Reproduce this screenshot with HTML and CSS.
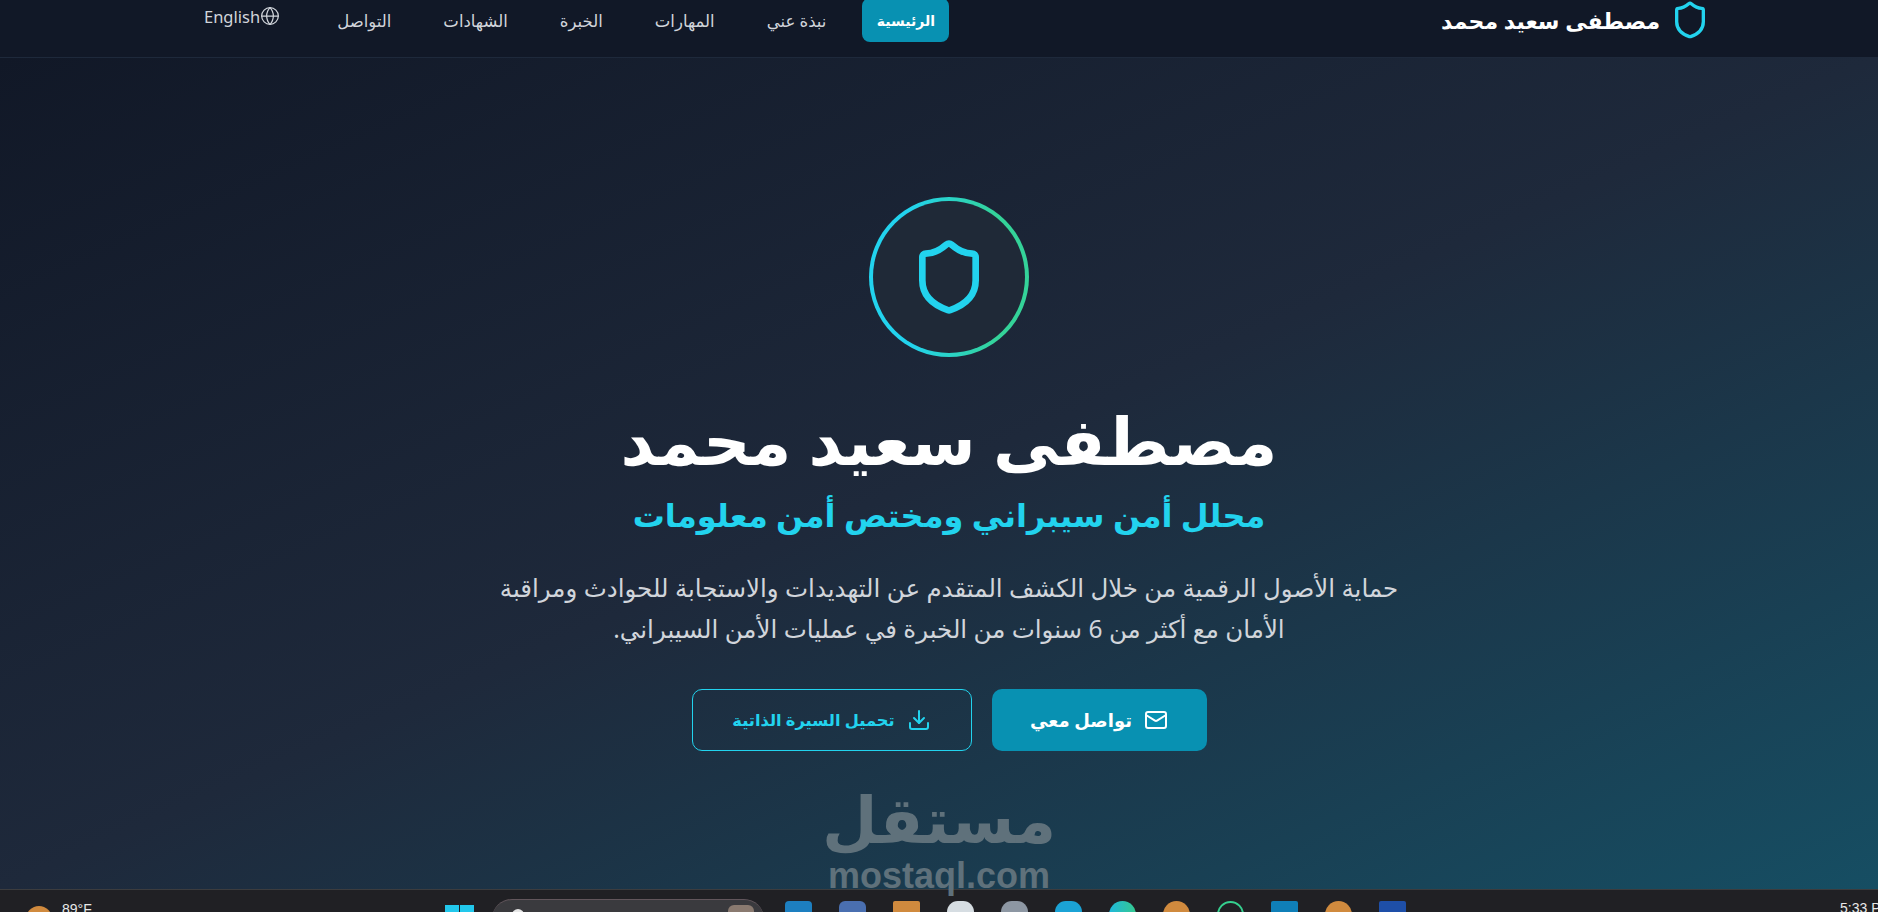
FILE: index.html

```html
<!DOCTYPE html>
<html lang="ar" dir="rtl">
<head>
  <meta charset="UTF-8">
  <title>مصطفى سعيد محمد</title>
  <link rel="stylesheet" href="styles.css">
</head>
<body>
  <header class="topbar">
    <div class="brand">
      <svg class="brand-icon" viewBox="0 0 24 24"><path d="M20 13c0 5-3.5 7.5-7.66 8.95a1 1 0 0 1-.67-.01C7.5 20.5 4 18 4 13V6a1 1 0 0 1 1-1c2 0 4.5-1.2 6.24-2.72a1.17 1.17 0 0 1 1.52 0C14.51 3.81 17 5 19 5a1 1 0 0 1 1 1z"/></svg>
      <span>مصطفى سعيد محمد</span>
    </div>
    <nav class="nav">
      <a class="active">الرئيسية</a>
      <a>نبذة عني</a>
      <a>المهارات</a>
      <a>الخبرة</a>
      <a>الشهادات</a>
      <a>التواصل</a>
      <a class="lang" dir="ltr">English<svg viewBox="0 0 24 24"><circle cx="12" cy="12" r="10"/><path d="M12 2a14.5 14.5 0 0 0 0 20 14.5 14.5 0 0 0 0-20"/><path d="M2 12h20"/></svg></a>
    </nav>
  </header>

  <main class="hero">
    <div class="hero-ring">
      <div class="hero-ring-inner">
        <svg viewBox="0 0 24 24"><path d="M20 13c0 5-3.5 7.5-7.66 8.95a1 1 0 0 1-.67-.01C7.5 20.5 4 18 4 13V6a1 1 0 0 1 1-1c2 0 4.5-1.2 6.24-2.72a1.17 1.17 0 0 1 1.52 0C14.51 3.81 17 5 19 5a1 1 0 0 1 1 1z"/></svg>
      </div>
    </div>
    <h1>مصطفى سعيد محمد</h1>
    <h2>محلل أمن سيبراني ومختص أمن معلومات</h2>
    <p>حماية الأصول الرقمية من خلال الكشف المتقدم عن التهديدات والاستجابة للحوادث ومراقبة الأمان مع أكثر من 6 سنوات من الخبرة في عمليات الأمن السيبراني.</p>
    <div class="actions">
      <a class="btn btn-primary">
        <svg viewBox="0 0 24 24"><rect x="2" y="4" width="20" height="16" rx="2"/><path d="m22 7-8.97 5.7a1.94 1.94 0 0 1-2.06 0L2 7"/></svg>
        تواصل معي
      </a>
      <a class="btn btn-outline">
        <svg viewBox="0 0 24 24"><path d="M21 15v4a2 2 0 0 1-2 2H5a2 2 0 0 1-2-2v-4"/><path d="m7 10 5 5 5-5"/><path d="M12 15V3"/></svg>
        تحميل السيرة الذاتية
      </a>
    </div>
  </main>

  <div class="watermark">
    <div class="watermark-ar">مستقل</div>
    <div class="watermark-en" dir="ltr">mostaql.com</div>
  </div>

  <footer class="taskbar" dir="ltr">
    <div class="weather"><span class="sun"></span><span>89°F</span></div>
    <div class="win-logo"><i></i><i></i></div>
    <div class="search"><span class="search-dot"></span><span class="search-pic"></span></div>
    <div class="tray">
      <span class="app blue"></span>
      <span class="app teams"></span>
      <span class="app folder"></span>
      <span class="app pale"></span>
      <span class="app grey"></span>
      <span class="app sky"></span>
      <span class="app chrome"></span>
      <span class="app orange"></span>
      <span class="app ring"></span>
      <span class="app square"></span>
      <span class="app orange"></span>
      <span class="app word"></span>
    </div>
    <div class="clock">5:33 PM</div>
  </footer>
</body>
</html>
```

FILE: styles.css

```css
* {
  box-sizing: border-box;
}

html, body {
  margin: 0;
  height: 912px;
  overflow: hidden;
}

body {
  position: relative;
  display: flex;
  flex-direction: column;
  font-family: "Noto Sans", "DejaVu Sans", sans-serif;
  background-color: #111827;
  color: #fff;
}

svg {
  fill: none;
  stroke: currentColor;
  stroke-width: 2;
  stroke-linecap: round;
  stroke-linejoin: round;
}

.topbar {
  flex: none;
  height: 58px;
  display: flex;
  justify-content: space-between;
  align-items: flex-start;
  padding: 0 168px 0 192px;
  background-color: #111827;
  border-bottom: 1px solid #1e293b;
}

.brand {
  display: flex;
  align-items: center;
  gap: 10px;
  margin-top: -2px;
  height: 44px;
  font-size: 22px;
  font-weight: 700;
}

.brand-icon {
  width: 40px;
  height: 40px;
  color: #22d3ee;
}

.nav {
  display: flex;
  align-items: flex-start;
  gap: 20px;
  margin-top: -2px;
}

.nav a {
  height: 44px;
  display: flex;
  align-items: center;
  padding: 0 16px;
  border-radius: 8px;
  font-size: 16.5px;
  color: #d1d5db;
}

.nav a.active {
  width: 87px;
  justify-content: center;
  padding: 0;
  background-color: #0891b2;
  color: #fff;
  font-size: 14px;
  font-weight: 700;
}

.nav a.lang {
  height: 36px;
  margin-right: 9px;
  padding: 0 12px;
  font-size: 16.5px;
}

.lang svg {
  width: 20px;
  height: 20px;
  stroke-width: 1.5;
}

.hero {
  flex: 1;
  display: flex;
  flex-direction: column;
  align-items: center;
  padding: 139px 0 0 20px;
  background: linear-gradient(to bottom right, #111827 0%, #1e293b 50%, #164e63 100%);
  text-align: center;
}

.hero-ring {
  width: 160px;
  height: 160px;
  padding: 4px;
  border-radius: 50%;
  background: linear-gradient(90deg, #22d3ee 25%, #34d399 80%);
}

.hero-ring-inner {
  width: 100%;
  height: 100%;
  display: flex;
  align-items: center;
  justify-content: center;
  border-radius: 50%;
  background-color: #1f2937;
  color: #22d3ee;
}

.hero-ring-inner svg {
  width: 80px;
  height: 80px;
}

h1 {
  margin: 46px 0 0;
  font-size: 66px;
  line-height: 72px;
  font-weight: 700;
}

h2 {
  margin: 18px 0 0;
  font-size: 32px;
  line-height: 44px;
  font-weight: 600;
  color: #22d3ee;
}

.hero p {
  width: 920px;
  margin: 30px 0 0;
  font-size: 24.5px;
  line-height: 41px;
  color: #d1d5db;
}

.actions {
  display: flex;
  gap: 20px;
  margin-top: 40px;
}

.btn {
  height: 62px;
  display: flex;
  align-items: center;
  justify-content: center;
  gap: 12px;
  border-radius: 10px;
  font-size: 18px;
  font-weight: 600;
}

.btn svg {
  width: 24px;
  height: 24px;
}

.btn-primary {
  width: 215px;
  background-color: #0891b2;
  color: #fff;
}

.btn-outline {
  width: 280px;
  border: 1px solid #22d3ee;
  color: #22d3ee;
  font-size: 16.3px;
}

.watermark {
  position: absolute;
  left: 815px;
  top: 781px;
  width: 248px;
  text-align: center;
  color: #5f717b;
  z-index: 2;
}

.watermark-ar {
  font-size: 64px;
  line-height: 76px;
  font-weight: 700;
}

.watermark-en {
  margin-top: 1px;
  font-family: "Liberation Sans", sans-serif;
  font-size: 36px;
  line-height: 36px;
  font-weight: 700;
}

.taskbar {
  flex: none;
  height: 23px;
  display: flex;
  align-items: flex-start;
  overflow: hidden;
  background-color: #202024;
  border-top: 1px solid #3c3c3e;
  font-family: "Liberation Sans", sans-serif;
  font-size: 14px;
  color: #e8e8e8;
}

.weather {
  width: 445px;
  flex: none;
  display: flex;
  gap: 10px;
  padding: 11px 0 0 26px;
}

.sun {
  width: 26px;
  height: 26px;
  margin-top: 5px;
  border-radius: 50%;
  background-color: #d08a3e;
}

.win-logo {
  flex: none;
  width: 29px;
  height: 29px;
  margin-top: 15px;
  display: flex;
  gap: 1px;
}

.win-logo i {
  flex: 1;
  background-color: #22c8ec;
}

.search {
  flex: none;
  width: 272px;
  height: 40px;
  margin: 9px 0 0 18px;
  display: flex;
  justify-content: space-between;
  padding: 9px 10px 0 20px;
  border-radius: 20px;
  border-top: 1px solid #62565c;
  background-color: #3a3a3e;
}

.search-dot {
  width: 12px;
  height: 12px;
  border-radius: 50%;
  background-color: #e6e6e6;
}

.search-pic {
  width: 26px;
  height: 20px;
  margin-top: -4px;
  border-radius: 6px;
  background-color: #8a7a70;
}

.tray {
  flex: none;
  display: flex;
  gap: 27px;
  margin: 11px 0 0 21px;
}

.app {
  flex: none;
  width: 27px;
  height: 27px;
  border-radius: 50%;
}

.blue { background-color: #1d7fc0; border-radius: 4px; }
.teams { background-color: #4a6fb0; border-radius: 6px; }
.folder { background-color: #d08a3e; border-radius: 2px; }
.pale { background-color: #d6dde2; border-radius: 40% 40% 0 0; }
.grey { background-color: #8d97a3; border-radius: 40% 40% 0 0; }
.sky { background-color: #1ba3d6; border-radius: 40% 40% 0 0; }
.chrome { background: linear-gradient(90deg, #1fb8dc, #35c98f); }
.orange { background-color: #d08a3e; }
.ring { background: none; border: 2px solid #35d08f; }
.square { background-color: #0f7fb8; border-radius: 2px; }
.word { background-color: #1e4fa8; border-radius: 2px; }

.clock {
  margin: 10px 0 0 auto;
  width: 38px;
  white-space: nowrap;
}
```
